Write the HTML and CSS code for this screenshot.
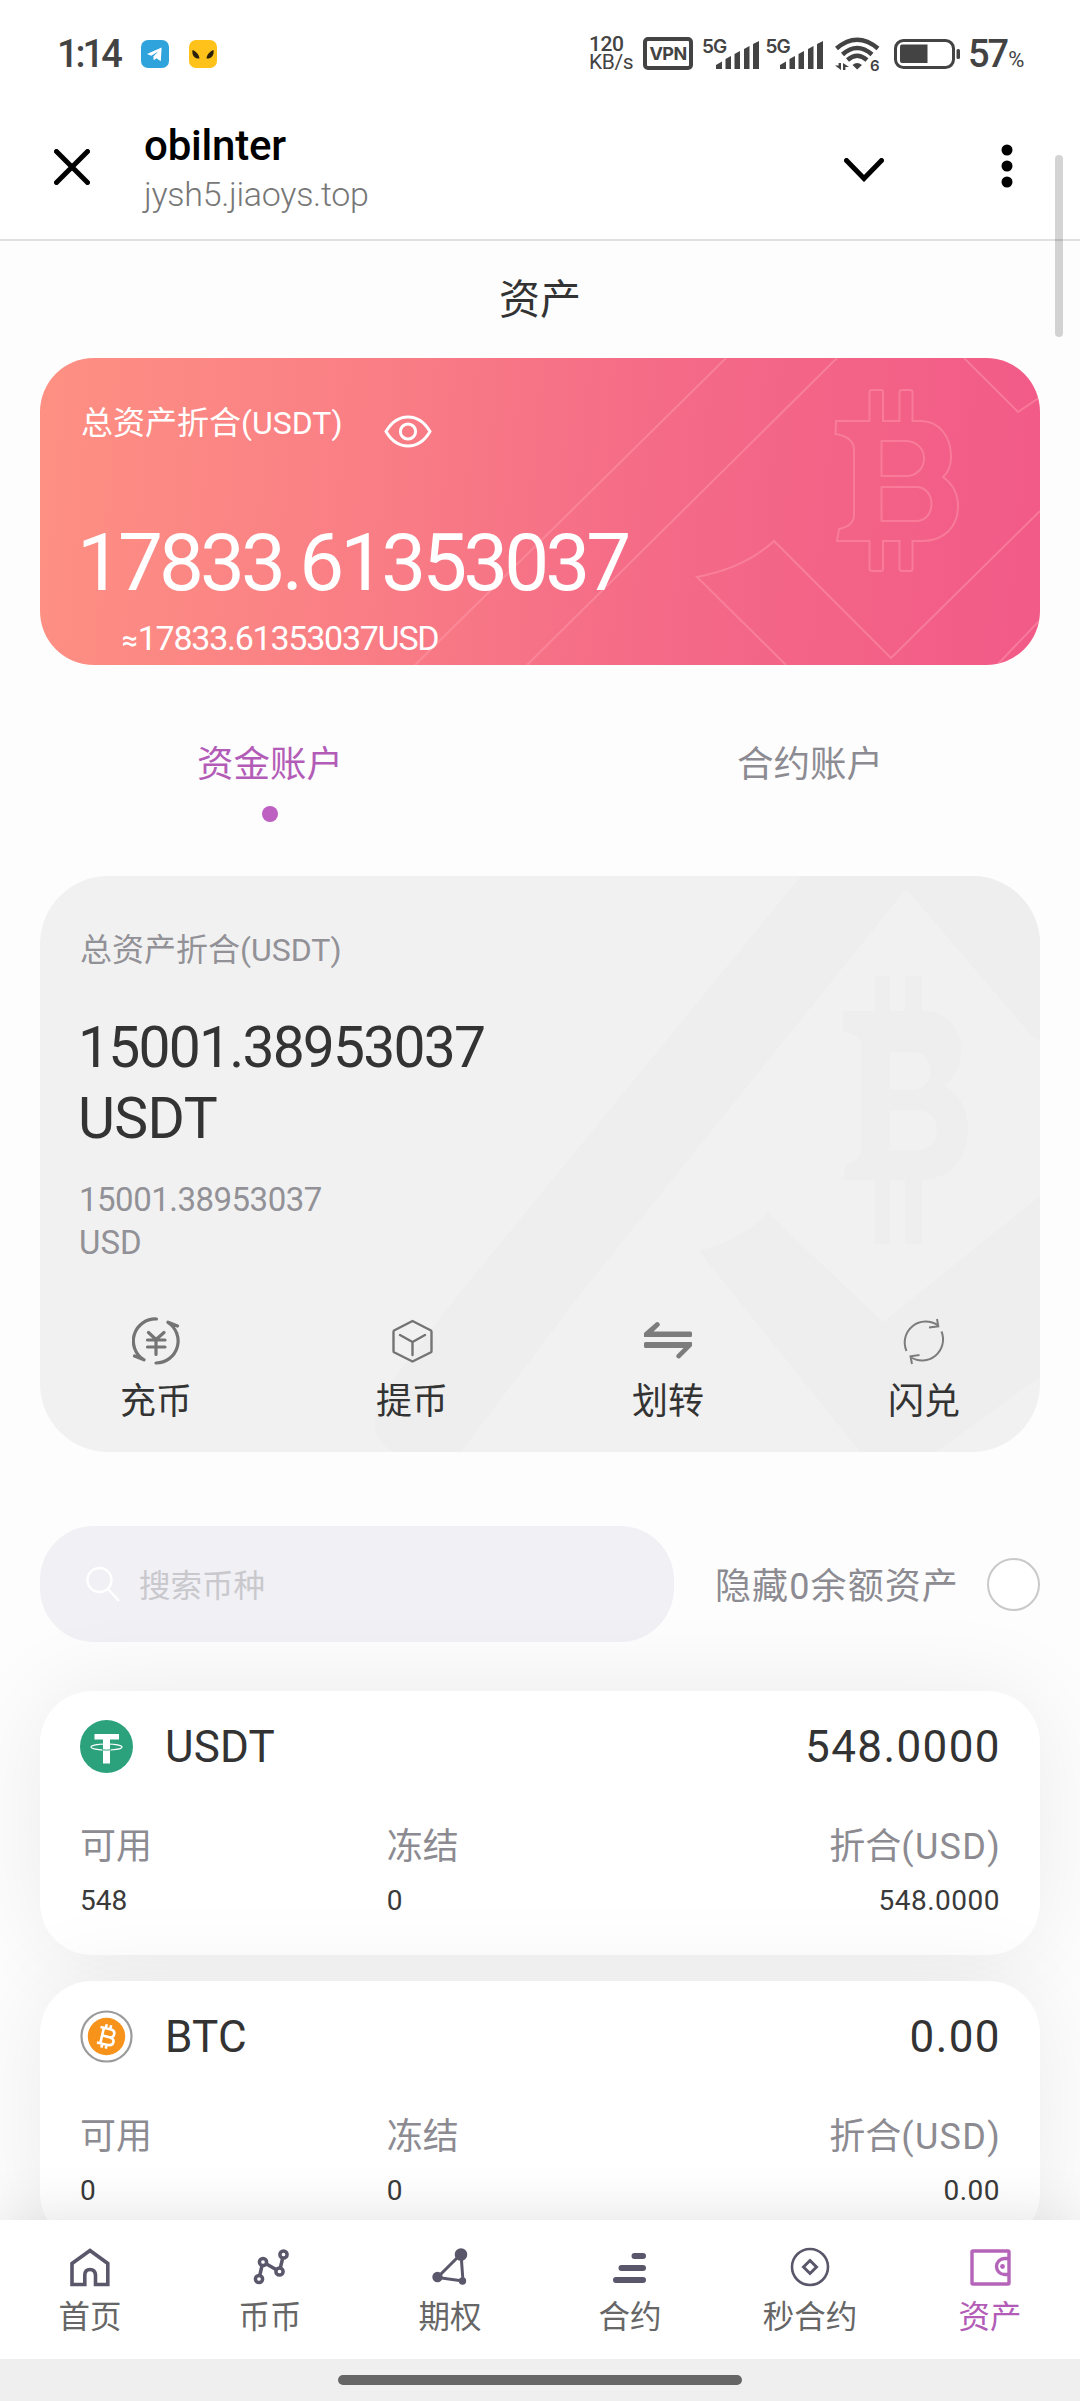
FILE: index.html
```html
<!DOCTYPE html>
<html lang="zh-CN">
<head>
<meta charset="utf-8">
<title>资产</title>
<link rel="stylesheet" href="styles.css">
</head>
<body>
<div class="status">
  <span class="clock">1:14</span>
  <svg class="app-tg" width="28" height="28" viewBox="0 0 28 28"><rect width="28" height="28" rx="7" fill="#2fa3dc"/><path d="M6 14 20.600 7.600 19.800 21.200 15.500 18.300 12.700 20.300 12.300 16.400 17.500 11.300 10.300 15.800Z" fill="#fff"/></svg>
  <svg class="app-y" width="28" height="28" viewBox="0 0 28 28"><rect width="28" height="28" rx="7" fill="#ffc21a"/><path d="M3.500 10C7 11.500 10 14 10.500 18.500 6 19 2.500 15.500 3.500 10ZM24.500 10C21 11.500 18 14 17.500 18.500 22 19 25.500 15.500 24.500 10Z" fill="#2a2208"/></svg>
  <div class="status-right">
    <div class="speed"><span>120</span><span>KB/s</span></div>
    <span class="vpn">VPN</span>
    <div class="sim"><span>5G</span><svg width="43" height="28" viewBox="0 0 43 28"><path d="M0 28V24L6 20.500V28ZM9.500 28V18L15 15V28ZM18.500 28V13L24 10V28ZM28 28V8L33.500 5V28ZM37 28V3L43 0V28Z"/></svg></div>
    <div class="sim"><span>5G</span><svg width="43" height="28" viewBox="0 0 43 28"><path d="M0 28V24L6 20.500V28ZM9.500 28V18L15 15V28ZM18.500 28V13L24 10V28ZM28 28V8L33.500 5V28ZM37 28V3L43 0V28Z"/></svg></div>
    <div class="wifi"><svg width="45" height="34" viewBox="0 0 45 34"><g fill="none" stroke="#434343" stroke-width="4.500"><path d="M1.500 11.500Q22 -6 43 11.500M7.500 17.500Q22 4.500 37 17.500M12.500 23Q22 14.500 32 23"/></g><path d="M17.500 28Q22 24 27 28L22.200 32.500ZM3.600 26H6V33L0 28.500H3.600ZM8 26 14 30H10.400V33H8Z" fill="#434343"/></svg><span>6</span></div>
    <svg class="battery" width="66" height="30" viewBox="0 0 66 30"><rect x="1.500" y="1.500" width="58" height="27" rx="8" fill="none" stroke="#434343" stroke-width="3"/><path d="M8 5.500H33.500V24H8Q6 24 6 22V7.500Q6 5.500 8 5.500Z" fill="#434343"/><rect x="62.500" y="10" width="3.500" height="10" rx="1.500" fill="#434343"/></svg>
    <span class="pct">57<small>%</small></span>
  </div>
</div>
<header class="browser-bar">
  <svg class="close" width="36" height="36" viewBox="0 0 36 36"><path d="M2.500 2.500 33.500 33.500M33.500 2.500 2.500 33.500" stroke="#000" stroke-width="5" stroke-linecap="round"/></svg>
  <div class="site"><div class="site-name">obilnter</div><div class="site-url">jysh5.jiaoys.top</div></div>
  <svg class="chev" width="40" height="24" viewBox="0 0 40 24"><path d="M2.500 2.500 20 20.500 37.500 2.500" fill="none" stroke="#000" stroke-width="5" stroke-linecap="round"/></svg>
  <svg class="dots" width="12" height="44" viewBox="0 0 12 44"><circle cx="6" cy="6" r="5.500"/><circle cx="6" cy="22" r="5.500"/><circle cx="6" cy="38" r="5.500"/></svg>
</header>
<div class="scrollbar"></div>
<main>
  <h1>资产</h1>
  <section class="total">
    <svg class="mark" width="1000" height="307" viewBox="0 0 1000 307" fill="none" stroke="#ff9db0" stroke-opacity=".45" stroke-width="2">
      <path d="M686 0 375 307M797 0 487 307M924 0 978 54 1000 39M746 307 657 219Q705 210 734 183L851 300 1000 153M1000 262 957 307"/>
      <path d="M796 63H829.500V34Q829.500 32 832 32H841Q843 32 843 34V63H859.500V34Q859.500 32 862 32H870Q872.500 32 872.500 34V63H882C901 64 911 80 911 99Q911 112 903 119Q918 130 918 148C918 168 905 183 882 183H872.500V211Q872.500 213 870 213H862Q859.500 213 859.500 211V183H843V211Q843 213 841 213H832Q829.500 213 829.500 211V183H797L799 171C808 169 814 165 814 157V92Q814 79 795.500 76Z"/>
      <path d="M841.500 83H865C877 83 884 91 884 100 884 110 877 118 866 118H841.500ZM841.500 129H876C886 129 891.500 137 891.500 146 891.500 155 886 163 876 163H841.500Z"/>
    </svg>
    <div class="total-head"><span>总资产折合(USDT)</span>
      <svg width="48" height="33" viewBox="0 0 48 33" fill="none" stroke="#fff" stroke-width="3"><path d="M2 16.500C7 8 14 2 24 2S41 8 46 16.500C41 25 34 31 24 31S7 25 2 16.500Z"/><circle cx="24" cy="16.500" r="7.600"/></svg>
    </div>
    <div class="total-num">17833.61353037</div>
    <div class="total-usd"><i>≈</i>17833.61353037USD</div>
  </section>
  <div class="tabs">
    <div class="tab on">资金账户<b></b></div>
    <div class="tab">合约账户</div>
  </div>
  <section class="fund">
    <svg class="mark" width="1000" height="576" viewBox="0 0 1000 576" fill="#eee">
      <path d="M761 0H1000V166L993 161 866 13 538 421 421 576H355Q320 560 345 514L414 424Z"/>
      <path d="M659 375Q700 365 728 337L843 446 1000 320V501L896 576H820Z"/>
      <path fill-rule="evenodd" d="M803 135H835V100H850V135H865V100H882V135H886C910 137 921 155 921 175 921 190 914 202 905 210 919 218 928 234 928 252 928 281 912 303 882 304V368H865V304H850V368H835V304H803L806 288Q821 286 821 272V168Q819 158 803 156ZM850 176V214H870Q890 213 891 195 890 177 872 176ZM850 234V274H878Q897 272 897 254 896 236 878 234Z"/>
    </svg>
    <div class="label">总资产折合(USDT)</div>
    <div class="fund-num">15001.38953037<br><em>USDT</em></div>
    <div class="fund-usd">15001.38953037<br><em>USD</em></div>
    <div class="actions">
      <div class="act"><svg width="48" height="48" viewBox="0 0 48 48" fill="none" stroke="#747474" stroke-width="3.200" stroke-linecap="round"><path d="M24.500 2A22 22 0 0 0 11.500 42.500M2.500 39 12 42.800M24 46A22 22 0 0 0 36 5.500M45.500 9 36 5.200M16.500 15.500 24 22.500 32 15.500M15.500 23H33M15.500 30H33M24 23V37.500"/></svg><span>充币</span></div>
      <div class="act"><svg width="48" height="48" viewBox="0 0 48 48" fill="none" stroke="#747474" stroke-width="2.400" stroke-linecap="round" stroke-linejoin="round"><path d="M24.500 4 43 13.500Q43.500 14 43.500 15V34Q43.500 35 43 35.300L24.500 44.500 6 35.300Q5.500 35 5.500 34V15Q5.500 14 6 13.500ZM12 18 24.500 25 37 18M24.500 25V38"/></svg><span>提币</span></div>
      <div class="act"><svg width="48" height="48" viewBox="0 0 48 48" fill="#7c7c7c"><path d="M0 19.500V16L12 5.500Q13.500 4.300 15 5.800T15.500 8.800L9.500 14.500H46.500Q48 14.500 48 16V18.500Q48 20 46.500 20H1Q0 20 0 19.500ZM48 25.500V29L36 41Q34.500 42.300 33 40.800T32.500 38L39.500 31H1.500Q0 31 0 29.500V26.500Q0 25 1.500 25H47Q48 25 48 25.500Z"/></svg><span>划转</span></div>
      <div class="act"><svg width="48" height="48" viewBox="0 0 48 48" fill="none" stroke="#7c7c7c" stroke-width="2"><path d="M6.500 34A21 21 0 0 1 38 8.500M37 2 38.300 9.300 29 10.500M41.500 14.500A21 21 0 0 1 10.500 40M12 47 10.500 39.300 19.500 38"/></svg><span>闪兑</span></div>
    </div>
  </section>
  <div class="filter">
    <div class="search"><svg width="34" height="36" viewBox="0 0 34 36" fill="none" stroke="#fff" stroke-width="2.400"><circle cx="13.500" cy="14" r="12"/><path d="M22 23 33 35"/></svg><span>搜索币种</span></div>
    <span class="hide">隐藏0余额资产</span>
    <span class="radio"></span>
  </div>
  <div class="coins">
    <article class="coin">
      <div class="coin-head">
        <svg width="53" height="53" viewBox="0 0 53 53"><circle cx="26.500" cy="26.500" r="26.500" fill="#2ba27c"/><path d="M14.500 14H39V19.500H30V43.500H23V19.500H14.500Z" fill="#fff"/><ellipse cx="26.500" cy="27" rx="15.500" ry="3" fill="none" stroke="#fff" stroke-width="1.200"/><path d="M22 29.800Q26.500 30.400 31 29.800" fill="none" stroke="#2ba27c" stroke-width="1"/></svg>
        <span class="sym">USDT</span><span class="amt">548.0000</span>
      </div>
      <div class="grid"><span>可用</span><span>冻结</span><span>折合<em>(USD)</em></span></div>
      <div class="grid vals"><span>548</span><span>0</span><span>548.0000</span></div>
    </article>
    <article class="coin">
      <div class="coin-head">
        <svg width="53" height="53" viewBox="0 0 53 53"><circle cx="26.500" cy="26.500" r="25" fill="#fff" stroke="#9b9b9b" stroke-width="2.200"/><circle cx="26.500" cy="26.500" r="18.700" fill="#f7931a"/><g transform="translate(26.500 26.500) rotate(13)" fill="none" stroke="#fff" stroke-width="2.600"><path d="M-8-8H2Q7-8 7-4T2 0H-4M-4.500-8V8M2 0Q8 0 8 4T2 8H-8M-2.500-12V-8M2-12V-8M-2.500 8V12M2 8V12"/></g></svg>
        <span class="sym">BTC</span><span class="amt">0.00</span>
      </div>
      <div class="grid"><span>可用</span><span>冻结</span><span>折合<em>(USD)</em></span></div>
      <div class="grid vals"><span>0</span><span>0</span><span>0.00</span></div>
    </article>
  </div>
</main>
<nav>
  <a><svg width="42" height="42" viewBox="0 0 42 42" fill="none" stroke="#5a576b" stroke-width="3.600"><path d="M3 17.500 21 4.500 38.800 17.500V38.500H26.500V29Q26 23.500 21 23.500T15.800 29V38.500H3Z"/></svg><span>首页</span></a>
  <a><svg width="42" height="42" viewBox="0 0 42 42" fill="none" stroke="#5a576b" stroke-width="3.500"><circle cx="10" cy="33" r="3.600"/><circle cx="14" cy="16" r="3.600"/><circle cx="30.500" cy="25.500" r="3.600"/><circle cx="34.500" cy="8.500" r="3.600"/><path d="M10.800 29.500 13 19.500M17.500 18 27 23.500M31.300 22 33.700 12"/></svg><span>币币</span></a>
  <a><svg width="42" height="42" viewBox="0 0 42 42" fill="#5a576b" stroke="#5a576b" stroke-width="3"><path d="M32 8 8.500 31.500 34 35Z" fill="none"/><circle cx="32" cy="8.500" r="4.800"/><circle cx="8.500" cy="31" r="3.700"/><circle cx="33.500" cy="35" r="2.200"/></svg><span>期权</span></a>
  <a><svg width="42" height="42" viewBox="0 0 42 42" fill="none" stroke="#5a576b" stroke-width="6" stroke-linecap="round"><path d="M25.500 10H34M12.500 22H34M7 34H34"/></svg><span>合约</span></a>
  <a><svg width="42" height="42" viewBox="0 0 42 42" fill="none" stroke="#5a576b" stroke-width="2.600"><circle cx="21" cy="21" r="18"/><path d="M21 14.500 27.500 21 21 27.500 14.500 21Z" stroke-width="3"/></svg><span>秒合约</span></a>
  <a class="on"><svg width="42" height="42" viewBox="0 0 42 42" fill="none" stroke="#b565b9" stroke-width="3.400"><rect x="3" y="5" width="37" height="33" rx="1"/><path d="M39 12.500H35.500A8 8 0 0 0 35.500 28.500H39"/><circle cx="33.500" cy="20.500" r="2.400" fill="#b565b9" stroke="none"/></svg><span>资产</span></a>
</nav>
<footer><div class="pill"></div></footer>
</body>
</html>
```

FILE: styles.css
```css
* { box-sizing: border-box; }
body { margin: 0; width: 1080px; height: 2401px; display: flex; flex-direction: column; overflow: hidden; position: relative; background: #fdfdfd; color: #333; font-family: Roboto, "Noto Sans CJK SC", sans-serif; }
svg { display: block; flex: none; }
em, i { font-style: normal; }

.status { height: 107px; display: flex; align-items: center; padding-left: 57px; color: #434343; background: #fff; }
.clock { width: 84px; font-size: 38px; font-weight: 500; letter-spacing: -3px; }
.app-y { margin-left: 20px; }
.status-right { margin-left: auto; margin-right: 54px; display: flex; align-items: center; }
.speed { width: 54px; display: flex; flex-direction: column; gap: 1px; font-size: 21px; letter-spacing: -.4px; }
.speed span { line-height: 17px; height: 17px; }
.speed span:first-child { font-weight: 500; }
.vpn { width: 50px; height: 33px; border: 4px solid #434343; border-radius: 5px; font: 700 18px/25px Inter, sans-serif; text-align: center; letter-spacing: -.6px; margin-right: 9px; }
.sim { width: 57px; height: 31px; margin-right: 6.500px; display: flex; align-items: flex-end; fill: #434343; }
.sim span { width: 14px; align-self: flex-start; font: 600 19px/17px Inter, sans-serif; letter-spacing: -1px; }
.wifi { display: flex; align-items: flex-end; width: 53px; margin-left: 6px; }
.wifi span { font: 600 15px/11px Inter, sans-serif; margin-left: -10px; }
.battery { margin-left: 6px; }
.pct { font-size: 38px; font-weight: 500; letter-spacing: -2px; margin-left: 8px; width: 58px; display: flex; align-items: baseline; }
.pct small { font-size: 22px; font-weight: 400; margin-left: 1px; }

.browser-bar { height: 134px; border-bottom: 2px solid #e0e0e0; display: flex; padding: 42px 67px 0 54px; background: #fff; }
.site { margin: -31px 0 0 54px; flex: 1; }
.site-name { font-size: 42px; font-weight: 500; line-height: 56px; color: #000; letter-spacing: -.2px; }
.site-url { margin-top: -2px; font-size: 34px; font-weight: 300; line-height: 44px; color: #777; letter-spacing: -.3px; }
.chev { margin-top: 9px; }
.dots { margin: -5px 0 0 117px; }
.scrollbar { position: absolute; left: 1055px; top: 155px; width: 8px; height: 182px; border-radius: 4px; background: rgba(0,0,0,.17); z-index: 5; }

main { flex: 1; padding: 0 40px; overflow: hidden; min-height: 0; }
h1 { margin: 0; height: 117px; line-height: 119px; font-size: 41px; font-weight: 400; text-align: center; }

.mark { position: absolute; left: 0; top: 0; z-index: -1; }
.total { position: relative; z-index: 0; height: 307px; border-radius: 54px; overflow: hidden; padding: 41px 41px 0; color: #fff; background: linear-gradient(95deg, #fe9083 0%, #f97d85 35%, #f46a87 62%, #f25a88 100%); }
.total-head { display: flex; font-size: 32px; line-height: 48px; }
.total-head svg { margin: 16px 0 0 41px; }
.total-num { margin: 67px 0 0 -4px; font-size: 80px; line-height: 96px; letter-spacing: -3.950px; }
.total-usd { margin: 3px 0 0 41px; font-size: 34px; line-height: 48px; letter-spacing: -1.250px; }
.total-usd i { font-size: 28px; font-weight: 500; margin-right: 1px; }

.tabs { display: flex; margin: 0 -40px; padding-top: 74px; height: 211px; }
.tab { flex: 1; display: flex; flex-direction: column; align-items: center; font-size: 36.500px; line-height: 52px; color: #8c8b92; }
.tab.on { color: #b35cb7; }
.tab b { width: 16px; height: 16px; border-radius: 50%; background: #bd60c1; margin-top: 15px; }

.fund { position: relative; z-index: 0; height: 576px; border-radius: 68px; overflow: hidden; background: #f1f1f1; padding: 50px 40px 0; }
.label { font-size: 32px; line-height: 48px; color: #929197; }
.fund-num { margin: 38px 0 0 -2px; font-size: 57px; line-height: 71px; letter-spacing: -1.800px; }
.fund-num em { letter-spacing: -.6px; }
.fund-usd { margin: 25px 0 0 -1px; font-size: 33px; line-height: 42.500px; letter-spacing: -.5px; color: #929197; }
.fund-usd em { letter-spacing: 0; }
.actions { display: grid; grid-template-columns: repeat(4, 256px); margin: 53px -52px 0; }
.act { display: flex; flex-direction: column; align-items: center; font-size: 36px; line-height: 52px; }
.act span { margin-top: 11px; }

.filter { display: flex; align-items: center; margin-top: 74px; height: 116px; }
.search { width: 634px; height: 116px; border-radius: 54px; background: #f1f0f5; display: flex; align-items: center; padding-left: 46px; font-size: 31.500px; color: #c8c8cd; }
.search span { margin: -3px 0 0 19px; }
.hide { margin: -2px 0 0 41px; font-size: 36px; color: #8c8b92; letter-spacing: 1.100px; }
.radio { margin-left: auto; width: 53px; height: 53px; border: 2.500px solid #c9c9c9; border-radius: 50%; background: #fff; }

.coins { margin-top: 49px; display: flex; flex-direction: column; gap: 26px; }
.coin { height: 264px; flex: none; padding: 29px 40px 0; border-radius: 52px; background: #fff; box-shadow: 0 0 92px rgba(0,0,0,.075); }
.coin-head { height: 53px; display: flex; align-items: center; font-size: 44px; line-height: 53px; }
.sym { margin: 2px 0 0 32px; letter-spacing: .2px; }
.amt { margin: 2px 0 0 auto; letter-spacing: 1.400px; margin-right: -1px; }
.grid { display: grid; grid-template-columns: repeat(3, 1fr); margin-top: 48px; font-size: 36px; line-height: 52px; color: #8c8b92; }
.grid em { letter-spacing: 1.300px; margin-right: -1px; }
.grid span:last-child { text-align: right; }
.vals { margin-top: 8px; font-size: 28px; line-height: 40px; color: #3a3a3a; }
.vals span:last-child { letter-spacing: .5px; }

nav { height: 139px; flex: none; position: relative; z-index: 2; display: flex; background: #fff; box-shadow: 0 0 60px rgba(0,0,0,.12); }
nav a { flex: 1; display: flex; flex-direction: column; align-items: center; padding-top: 26px; font-size: 31.500px; line-height: 44px; color: #666; }
nav span { margin-top: 8px; }
nav .on { color: #b35cb7; }
footer { height: 42px; flex: none; position: relative; z-index: 3; background: #efefef; padding-top: 16px; }
.pill { width: 404px; height: 10px; border-radius: 5px; background: #666; margin: 0 auto; }
```
